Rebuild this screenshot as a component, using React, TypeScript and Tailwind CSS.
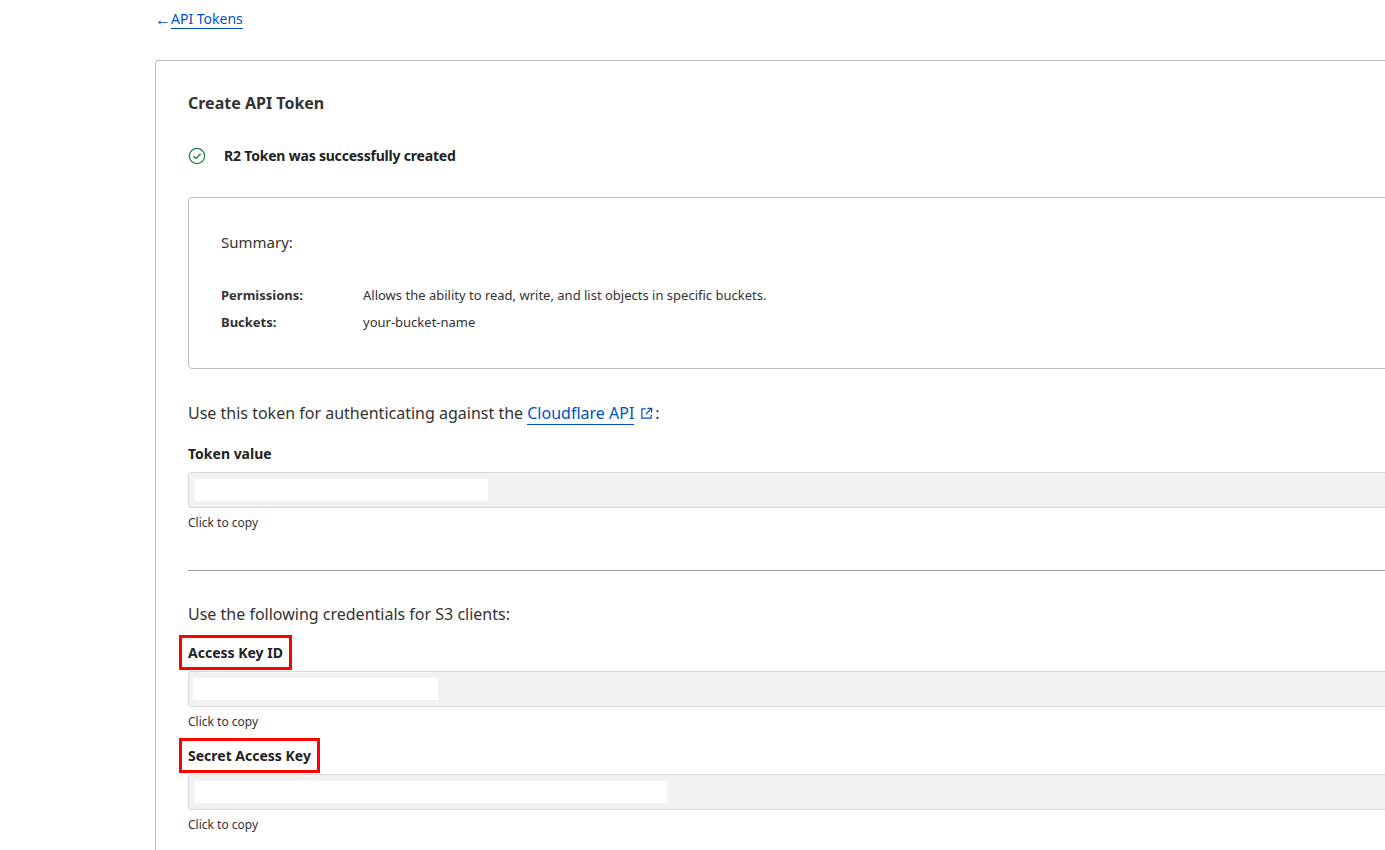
import React from 'react'

const CopyField = ({ label, boxed, fill }: { label: string; boxed?: boolean; fill: string }) => {
    return (
        <div>
            <div className='flex h-[24px] items-center'>
                {boxed ? (
                    <span className='-ml-[9px] border-[3px] border-[#ff0000] px-[6px] py-[4px] text-[14px] font-bold text-[#222]'>{label}</span>
                ) : (
                    <span className='text-[14px] font-bold text-[#222]'>{label}</span>
                )}
            </div>
            <div className='mt-[7px] h-[36px] rounded-[3px] border border-[#d9d9d9] bg-[#f2f2f2] flex items-center px-[6px]'>
                <div className={`h-[22px] bg-white ${fill}`}></div>
            </div>
            <div className='mt-[6px] text-[12px] text-[#333]'>Click to copy</div>
        </div>
    )
}

export default function App() {
    return (
        <div className='h-[850px] w-[1385px] overflow-hidden bg-white text-[#313131]' style={{ fontFamily: '"Noto Sans", sans-serif' }}>
            <div className='pl-[155px] pt-[7px]'>
                <a className='inline-flex items-center text-[14px] text-[#0051c3]'>
                    <span className='text-[16px] leading-[18px] text-[#0051c3]'>←</span>
                    <span className='border-b border-[#0051c3] leading-[18px]'>API Tokens</span>
                </a>

                <div className='mt-[29px] w-[1300px] rounded-[3px] border border-[#bdbdbd] pl-[32px] pt-[30px] pb-[20px]'>
                    <h2 className='text-[16px] font-bold text-[#333]'>Create API Token</h2>

                    <div className='mt-[30px] flex items-center gap-[18px]'>
                        <svg width='18' height='18' viewBox='0 0 20 20' fill='none' stroke='#1e7a3c' strokeWidth='1.4'>
                            <circle cx='10' cy='10' r='8.5' />
                            <path d='M6 10.2l2.7 2.6L14 7.5' />
                        </svg>
                        <span className='text-[14px] font-bold tracking-[-0.2px] text-[#222]'>R2 Token was successfully created</span>
                    </div>

                    <div className='mt-[31px] h-[172px] rounded-[4px] border border-[#bdbdbd] pl-[32px] pt-[33px]'>
                        <div className='text-[15px] text-[#333]'>Summary:</div>
                        <div className='mt-[32px] grid grid-cols-[142px_1fr] gap-y-[8px] text-[13px] text-[#333]'>
                            <span className='font-bold'>Permissions:</span>
                            <span>Allows the ability to read, write, and list objects in specific buckets.</span>
                            <span className='font-bold'>Buckets:</span>
                            <span>your-bucket-name</span>
                        </div>
                    </div>

                    <p className='mt-[32px] text-[16px] text-[#333]'>
                        Use this token for authenticating against the{' '}
                        <a className='border-b border-[#0051c3] text-[#0051c3]'>Cloudflare API</a>
                        <svg className='ml-[6px] mr-[2px] inline-block align-[-1px]' width='13' height='13' viewBox='0 0 14 14' fill='none' stroke='#0051c3' strokeWidth='1.3'>
                            <path d='M6 2H2v10h10V8' />
                            <path d='M8 1.5h4.5V6M12.5 1.5L6.5 7.5' />
                        </svg>
                        :
                    </p>

                    <div className='mt-[16px]'>
                        <CopyField label='Token value' fill='w-[293px]' />
                    </div>

                    <hr className='mt-[38px] border-t border-[#999]' />

                    <p className='mt-[31px] text-[16px] text-[#333]'>Use the following credentials for S3 clients:</p>

                    <div className='mt-[14px]'>
                        <CopyField label='Access Key ID' boxed fill='w-[245px] -ml-[2px]' />
                    </div>
                    <div className='mt-[12px]'>
                        <CopyField label='Secret Access Key' boxed fill='w-[472px]' />
                    </div>
                </div>
            </div>
        </div>
    )
}
